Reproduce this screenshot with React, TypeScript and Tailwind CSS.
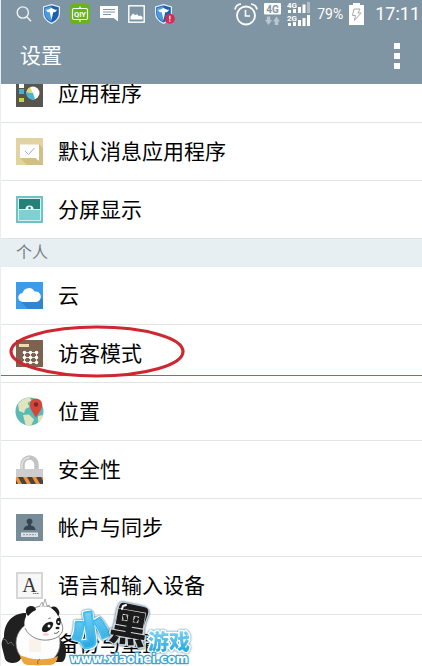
import type { ReactNode } from "react";

function Shield({ alert = false }: { alert?: boolean }) {
  return (
    <svg width={alert ? 20 : 17} height="20" viewBox={alert ? "0 0 20 20" : "0 0 17 20"} aria-hidden="true">
      <path d="M8.5 .6 16.4 3v6.500c0 5-4 8-7.900 9.900C4.600 17.500.6 14.500.6 9.500V3z" fill="#1d5fae" stroke="#e4eff8" strokeWidth="1.200" />
      <path d="M8.500 2 2 4v5.500c0 4 3 6.500 6.500 8.300z" fill="#4a9be0" />
      <path d="M3 5.500c2.500 1 3.500-.8 5.500-1.500 2 .7 3 2.500 5.500 1.500-.4 2-2 2.800-3.800 2.800L8.500 16 6.800 8.300C5 8.300 3.400 7.500 3 5.500z" fill="#fff" />
      {alert && (
        <g>
          <circle cx="14.800" cy="14.800" r="5" fill="#d42c54" />
          <path d="M14.800 11.800v3.600M14.800 16.400v1.400" stroke="#fff" strokeWidth="1.300" />
        </g>
      )}
    </svg>
  );
}

function StatusBar() {
  return (
    <div className="flex h-[27px] items-center justify-between pr-[2px] pl-[15px]">
      <div className="flex items-center gap-[10px]">
        <svg width="17" height="18" viewBox="0 0 17 18" fill="none" stroke="#f1f5f7" strokeWidth="1.400" aria-hidden="true">
          <circle cx="6.800" cy="7.500" r="5.600" />
          <path d="m10.800 11.800 4.200 4.400" />
        </svg>
        <Shield />
        <svg width="20" height="20" viewBox="0 0 20 20" aria-hidden="true">
          <rect width="20" height="20" rx="3.500" fill="#66b51c" />
          <rect x="2.500" y="4.500" width="15" height="11" rx="1.500" fill="none" stroke="#fff" strokeWidth="1.200" />
          <path d="M9 3.200h2M9 17h2" stroke="#fff" />
          <text x="10" y="12.800" textAnchor="middle" fill="#fff" fontSize="7.500" fontWeight="700" fontFamily="Roboto, sans-serif">QIY</text>
        </svg>
        <svg width="18" height="17" viewBox="0 0 18 17" aria-hidden="true">
          <path d="M0 1h18v15.500L13.800 13H0z" fill="#fff" />
          <path d="M3 4.500h12M3 7h12M3 9.500h8" stroke="#8196a4" strokeWidth="1.100" />
        </svg>
        <svg width="17" height="18" viewBox="0 0 17 18" aria-hidden="true">
          <rect x=".8" y=".8" width="15.400" height="16.400" fill="none" stroke="#fff" strokeWidth="1.400" />
          <path d="M2.500 14.500v-3l2.500-3 2 1.500 2-.8 2 2 1.500-.8 2 1.600v2.500z" fill="#fff" />
        </svg>
        <Shield alert />
      </div>
      <div className="flex items-center gap-[6px] text-white">
        <svg width="24" height="24" viewBox="0 0 24 24" fill="none" stroke="#fff" aria-hidden="true">
          <circle cx="12" cy="13.500" r="9" strokeWidth="1.800" />
          <path d="M11.500 8v6h4.500" strokeWidth="1.600" />
          <path d="M1 7.500C1.500 4.500 4 2.300 7 2M23 7.500c-.5-3-3-5.200-6-5.500" strokeWidth="1.700" />
        </svg>
        <svg width="17" height="24" viewBox="0 0 17 24" aria-hidden="true">
          <rect y="1" width="17" height="11.500" rx="1" fill="#fff" />
          <text x="8.500" y="10.500" textAnchor="middle" fill="#8196a4" fontSize="10" fontWeight="700" fontFamily="Roboto, sans-serif">4G</text>
          <path d="M2.800 14.500h3.400V18H8l-3.500 5L1 18h1.800zM10.800 23h3.400v-3.500H16L12.500 14.500 9 19.500h1.800z" fill="#b9c6cf" />
        </svg>
        <svg width="24" height="26" viewBox="0 0 24 26" fill="#fff" aria-hidden="true">
          <text x="0" y="7" fontSize="8" fontWeight="700" fontFamily="Roboto, sans-serif">4G</text>
          <path d="M1 9h3v3H1zM6 8h3v4H6zM11 6h3v6h-3zM15.500 3.500h3V12h-3z" />
          <path d="M20 1h3v11h-3z" fill="#afbdc7" />
          <text x="0" y="20" fontSize="8" fontWeight="700" fontFamily="Roboto, sans-serif">2G</text>
          <path d="M1 22h3v3H1zM6 21h3v4H6zM11 19h3v6h-3zM15.500 17h3v8h-3zM20 14h3v11h-3z" />
        </svg>
        <span className="text-sm">79%</span>
        <svg width="15" height="22" viewBox="0 0 15 22" aria-hidden="true">
          <path d="M4 0h7v2h4v20H0V2h4z" fill="#fff" />
          <path d="M5 6h6l-2 4h3l-6.500 7.500 1-5H3.500z" fill="#fff" stroke="#a9a9a9" strokeWidth="1" />
        </svg>
        <span className="ml-[5px] text-lg">17:11</span>
      </div>
    </div>
  );
}

const AppsIcon = () => (
  <svg width="27" height="27" viewBox="0 0 27 27">
    <path fill="#56564f" d="M0 0h27v27H0z" />
    <path fill="#fff" d="M3 3h5v5H3z" />
    <path fill="#37b7d4" d="M3 9h5v5H3z" />
    <path fill="#c4d43d" d="M3 18h5v4H3z" />
    <circle cx="17" cy="13" r="6.500" fill="#fff" />
    <path fill="#44b9ce" d="M17 13 10.500 12A6.500 6.500 0 0 0 19 19.200z" />
    <path fill="#d8dd68" d="m17 13-6.500-1A6.500 6.500 0 0 1 14 7.200z" />
  </svg>
);

const MessageIcon = () => (
  <svg width="27" height="27" viewBox="0 0 27 27">
    <path fill="#e3d3a0" d="M0 0h27v27H0z" />
    <path fill="#d2bf86" d="m4 20 7 7h16V10l-4-4z" />
    <path fill="#fff" d="M4 6.500h19V23l-3.500-3H4z" />
    <path fill="none" stroke="#a3a8bd" d="m9 13 3.500 3.500L18.500 10" />
  </svg>
);

const SplitIcon = () => (
  <svg width="27" height="27" viewBox="0 0 27 27">
    <path fill="#6cc4c5" d="M0 0h27v27H0z" />
    <path fill="#258078" d="M3 3h21v10H3z" />
    <path fill="#7fd0d1" d="M3 14h21v10H3z" />
    <path fill="none" stroke="#d4f1f0" d="M2.500 2.500h22v22h-22zM3 13.500h21" />
    <path fill="#eefafa" d="M9.500 13.500a4 4 0 0 1 8 0z" />
    <circle cx="13.500" cy="12" r="1.300" fill="#258078" />
  </svg>
);

const CloudIcon = () => (
  <svg width="27" height="27" viewBox="0 0 27 27">
    <path fill="#3d9be8" d="M0 0h27v27H0z" />
    <path fill="#3184cf" d="m4 19 8 8h15V17l-3-3z" />
    <path fill="#fff" d="M7 20a4.500 4.500 0 0 1-.5-9A6.500 6.500 0 0 1 18.500 9.500 5.300 5.300 0 0 1 20.500 20z" />
  </svg>
);

const GuestIcon = () => (
  <svg width="27" height="27" viewBox="0 0 27 27">
    <path fill="#7d6250" d="M0 0h27v27H0z" />
    <path fill="#eadcae" d="M3 4h10v3H3z" />
    <path stroke="#e8ded5" d="M8.500 12.500h12M8.500 17.500h12M8.500 22.500h12M8.500 12.500v10M14.500 12.500v10M20.500 12.500v10" />
    <g fill="#fff">
      {[12.5, 17.5, 22.5].map((y) => [8.5, 14.5, 20.5].map((x) => <circle key={`${x}-${y}`} cx={x} cy={y} r="1.800" />))}
    </g>
  </svg>
);

const LocationIcon = () => (
  <svg className="-ml-px" width="29" height="29" viewBox="0 0 29 29">
    <circle cx="14.500" cy="14.500" r="14" fill="#5bb9b8" />
    <path fill="#dfe5bd" d="M3 7C6 3 10 .8 14.500.5l2 3-4 2.500 2 4-4 2-1.500 4-5-2zM8 18l6-.5 5 5-3 6c-3 .3-5-.5-5.500-1zM23 19l5-1c-1 4-3 6-5 7.500z" />
    <path fill="#d74438" d="M21 20.500C17 14.500 14.800 11 14.800 7.700a6.200 6.200 0 0 1 12.400 0C27.200 11 25 14.500 21 20.500z" />
    <circle cx="21" cy="7.500" r="2.200" fill="#742b2a" />
  </svg>
);

const LockIcon = () => (
  <svg width="27" height="29" viewBox="0 0 27 29">
    <path fill="none" stroke="#c2c2c2" strokeWidth="4.500" d="M6.500 15V9.500a7 7 0 0 1 14 0V15" />
    <path fill="none" stroke="#e2e2e2" strokeWidth="1.500" d="M6 15V9.500a7.500 7.500 0 0 1 7.500-7" />
    <path fill="#cdcdcd" d="M0 14h27v9H0z" />
    <path fill="#ee9137" d="M0 22h27v7H0z" />
    <path fill="#4a4340" d="M2 22h5l4 7H6zM11 22h5l4 7h-5zM20 22h5l2 3.500V29h-3zM0 25l2 4H0z" />
  </svg>
);

const AccountIcon = () => (
  <svg width="27" height="27" viewBox="0 0 27 27">
    <path fill="#778b98" d="M0 0h27v27H0z" />
    <path fill="#354650" d="M13.500 4.500a3 3 0 0 1 1.500 5.600v1.400c2.500.6 4.500 1.800 4.500 4.500h-12c0-2.700 2-3.900 4.500-4.500v-1.400a3 3 0 0 1 1.500-5.600z" />
    <path fill="#dce3e7" d="M5 18.500h17v4.500H5z" />
    <path stroke="#8998a2" strokeDasharray="2 1" d="M7 20.700h13" />
  </svg>
);

const LanguageIcon = () => (
  <svg width="27" height="27" viewBox="0 0 27 27">
    <path fill="#f7f7f7" stroke="#d6d6d6" strokeWidth="2" d="M1 1h25v25H1z" />
    <text x="13.500" y="20" textAnchor="middle" fontSize="20" fill="#333" fontFamily="Liberation Serif, serif">A</text>
    <path stroke="#777" strokeDasharray="1.500 .5" d="M17 21.500h6" />
  </svg>
);

const BackupIcon = () => (
  <svg width="27" height="27" viewBox="0 0 27 27">
    <path fill="#f2eee8" d="M0 0h27v27H0z" />
    <path fill="#eeb867" d="M8 8h11v11H8z" />
  </svg>
);

function Row({ icon, label, children }: { icon: ReactNode; label: string; children?: ReactNode }) {
  return (
    <li className="relative border-b border-[#e2e5e6]">
      <button type="button" className="flex h-[57px] w-full items-center pl-[15px] text-left">
        <span className="flex w-[42px] shrink-0 items-center" aria-hidden="true">{icon}</span>
        <span className="pt-0.5 text-[21px] text-black">{label}</span>
      </button>
      {children}
    </li>
  );
}

function GuestMark() {
  return (
    <>
      <hr className="absolute inset-x-0 bottom-[6px] border-t border-[#e0474d]" />
      <svg className="absolute top-0 left-[8px]" width="176" height="54" viewBox="0 0 176 54" fill="none" aria-hidden="true">
        <ellipse cx="88" cy="26.500" rx="86" ry="24.500" stroke="#cf2730" strokeWidth="3.200" />
      </svg>
    </>
  );
}

function Watermark() {
  return (
    <svg className="absolute bottom-0 -left-px" width="196" height="70" viewBox="0 0 196 70" fontFamily="Noto Sans CJK SC, sans-serif">
      <defs>
        <linearGradient id="sky" x1="0" y1="0" x2="0" y2="1">
          <stop offset="0" stopColor="#8fe0fa" />
          <stop offset="1" stopColor="#1b9fdd" />
        </linearGradient>
      </defs>
      <g>
        <path d="M26 17C12 17 4 27 4 41c-2 3-3 6-2 10l3 12c2 5 12 5 15 1l6-12z" fill="#202020" />
        <path d="m3 43 3 1 2 4 3-2 3 4" fill="none" stroke="#777" strokeWidth=".8" />
        <path d="M52 42c9 0 14 5 14 12 0 6-1 12-5 12H50z" fill="#202020" />
        <ellipse cx="38" cy="47" rx="22" ry="22" fill="#fdfdfd" stroke="#777" strokeWidth=".7" />
        <path d="M20 59c10 5 28 6 38 1-1 6-4 9-8 9H28c-4 0-7-4-8-10z" fill="#eda43c" />
        <path d="M38 68c-1-2 0-4 2-5" stroke="#7a4a18" fill="none" strokeWidth=".7" />
        <path d="M29 43h12v13H29z" fill="#faf3ec" />
        <path d="M28 17C22 25 23 36 34 42c9 4 21 3 26-3 4-4 3-9 1-13C58 14 51 9 43 10c-6 0-11 3-15 7z" fill="#fff" />
        <path d="M25 32c2 5 6 8 10 10 9 4 20 2 25-3 4-4 3-9 1-13C58 14 51 9 43 10c-6 0-11 3-15 7" fill="none" stroke="#555" strokeWidth=".7" />
        <path d="M28 20c-4-4-2-10 3-10 3 0 5 2 5 4-3 1-5 3-8 6zM51 12c2-3 7-1 8 3 1 2 0 4-1 5-2-4-4-6-7-8z" fill="#1c1c1c" />
        <path d="m39 11 3-5 1 4 2-7 2 7 3-1" fill="#fff" stroke="#888" strokeWidth=".7" />
        <path d="M42 34c0-4 3-7 7-8 3-1 5 1 4 3-1 4-6 8-9 7-1 0-2-1-2-2zM56 26c0-3 2-5 4-4 1 2 1 5 0 7-2 1-4-1-4-3z" fill="#1c1c1c" />
        <circle cx="49" cy="30" r="1.500" fill="#fff" />
        <circle cx="58.500" cy="26" r="1" fill="#fff" />
        <ellipse cx="57.500" cy="32" rx="2" ry="1.200" fill="#222" />
        <path d="M54 37c2 1 4 0 5-2" fill="none" stroke="#333" strokeWidth=".8" />
        <ellipse cx="46" cy="38.500" rx="3" ry="1.300" fill="#f8c4cc" />
        <path d="M48 23c1-1 2-1 3-1" stroke="#777" strokeWidth=".7" />
      </g>
      <g fontWeight="900" strokeLinejoin="round" paintOrder="stroke" textAnchor="middle">
        <g className="[filter:drop-shadow(1px_1px_0_white)_drop-shadow(-1px_-1px_0_white)_drop-shadow(0_0_1px_#1c5670)]">
          <text x="90" y="47" fontSize="36" fill="url(#sky)" stroke="#43bdec" strokeWidth="4" transform="rotate(-8 90 34)">小</text>
        </g>
        <g className="[filter:drop-shadow(1px_1px_0_#c9d6dc)_drop-shadow(-1px_-1px_0_#c9d6dc)_drop-shadow(0_0_1px_#1c5670)]">
          <path d="M119 11c1-4 3-5 6-4l19 4c4 1 5 3 4 7l-4 11c-1 3-3 4-6 3l-18-3c-4-1-5-3-4-6z" fill="#1b1b1b" />
          <text x="129" y="46" fontSize="38" fill="#1b1b1b" stroke="#d5d9db" strokeWidth="1.200" transform="rotate(10 129 32)">黑</text>
          <path d="m122 13 1-3 3-1" fill="none" stroke="#fff" strokeWidth="2" strokeLinecap="round" />
        </g>
        <g className="[filter:drop-shadow(0_0_1px_#2c7d9c)]">
          <text x="169" y="53" fontSize="21" fill="url(#sky)" stroke="#fff" strokeWidth="3">游戏</text>
        </g>
        <text x="129" y="67" fontSize="12" fontFamily="DejaVu Sans, sans-serif" fontWeight="700" fill="#fff" stroke="#3ba5d3" strokeWidth="2.500">www.xiaohei.com</text>
      </g>
    </svg>
  );
}

export default function App() {
  return (
    <div className="relative h-screen overflow-hidden border-l border-[#e8eff2] bg-white font-[Roboto,'Noto_Sans_CJK_SC',sans-serif]">
      <header className="relative z-10 bg-[#8095a3]">
        <StatusBar />
        <div className="flex h-[57px] items-center justify-between pr-[22px] pl-[19px]">
          <h1 className="pt-0.5 text-[21px] text-white">设置</h1>
          <button type="button" aria-label="更多选项" className="flex flex-col gap-1">
            <span className="size-[6px] bg-white" />
            <span className="size-[6px] bg-white" />
            <span className="size-[6px] bg-white" />
          </button>
        </div>
      </header>
      <main className="-mt-[19px]">
        <ul>
          <Row icon={<AppsIcon />} label="应用程序" />
          <Row icon={<MessageIcon />} label="默认消息应用程序" />
          <Row icon={<SplitIcon />} label="分屏显示" />
        </ul>
        <h2 className="flex h-7 items-center bg-[#e8eff3] pl-[15px] text-base text-[#777c7f]">个人</h2>
        <ul>
          <Row icon={<CloudIcon />} label="云" />
          <Row icon={<GuestIcon />} label="访客模式">
            <GuestMark />
          </Row>
          <Row icon={<LocationIcon />} label="位置" />
          <Row icon={<LockIcon />} label="安全性" />
          <Row icon={<AccountIcon />} label="帐户与同步" />
          <Row icon={<LanguageIcon />} label="语言和输入设备" />
          <Row icon={<BackupIcon />} label="备份与重置" />
        </ul>
      </main>
      <Watermark />
    </div>
  );
}
